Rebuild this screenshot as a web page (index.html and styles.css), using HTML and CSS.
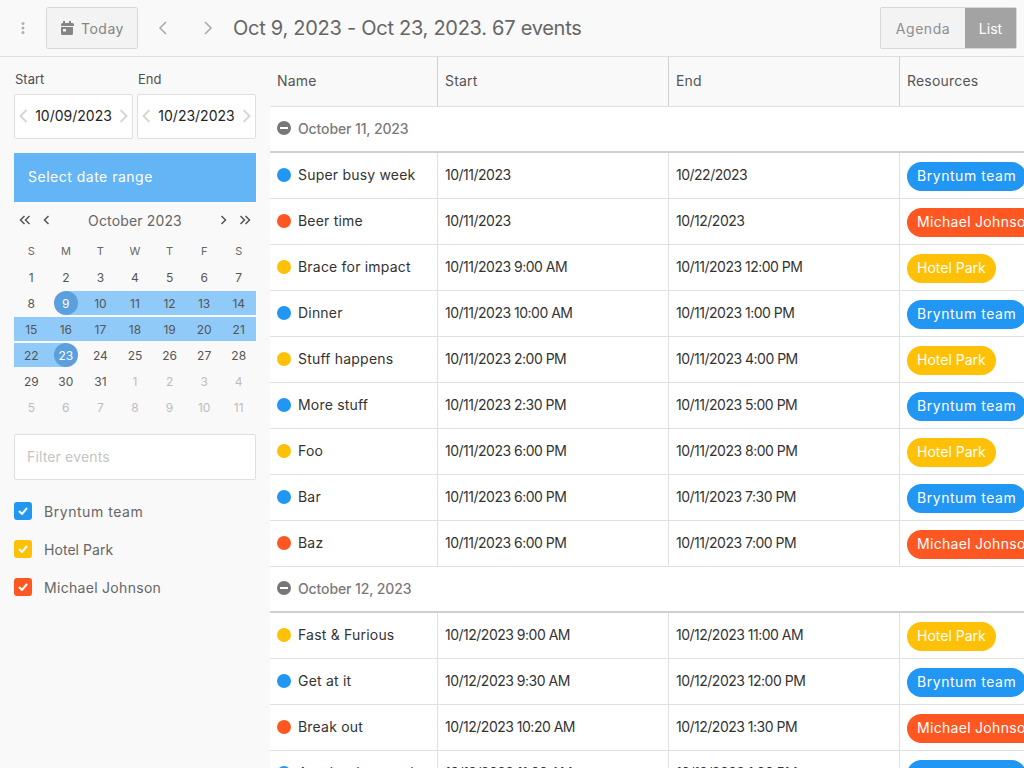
FILE: index.html
```html
<!DOCTYPE html>
<html lang="en">
<head>
    <meta charset="UTF-8">
    <title>Calendar list view</title>
    <link rel="stylesheet" href="styles.css">
</head>
<body>
    <header class="toolbar">
        <svg class="menu-icon" width="4" height="12" viewBox="0 0 4 12"><circle cx="2" cy="1.500" r="1.500"/><circle cx="2" cy="6" r="1.500"/><circle cx="2" cy="10.500" r="1.500"/></svg>
        <button class="today-btn">
            <svg width="14" height="14" viewBox="0 0 14 14"><path d="M3 0h2v2h4V0h2v2h1.500A1.500 1.500 0 0 1 14 3.500V5H1V3.500A1.500 1.500 0 0 1 2.500 2H3zM1 6h12v6.500a1.500 1.500 0 0 1-1.500 1.500h-9A1.500 1.500 0 0 1 1 12.500zm2 2v2.500h3V8z"/></svg>
            Today
        </button>
        <svg class="nav-arrow" width="10" height="14" viewBox="0 0 10 14"><path d="M8 1L2 7l6 6"/></svg>
        <svg class="nav-arrow" width="10" height="14" viewBox="0 0 10 14"><path d="M2 1l6 6-6 6"/></svg>
        <h1 class="range-title">Oct 9, 2023 - Oct 23, 2023. 67 events</h1>
        <div class="view-switch">
            <span class="view-btn">Agenda</span>
            <span class="view-btn active">List</span>
        </div>
    </header>

    <div class="main">
        <aside class="sidebar">
            <div class="date-fields">
                <div class="date-field">
                    <label>Start</label>
                    <div class="date-input">
                        <svg width="9" height="14" viewBox="0 0 9 14"><path d="M7.500 1L1.500 7l6 6"/></svg>
                        <span>10/09/2023</span>
                        <svg width="9" height="14" viewBox="0 0 9 14"><path d="M1.500 1l6 6-6 6"/></svg>
                    </div>
                </div>
                <div class="date-field">
                    <label>End</label>
                    <div class="date-input">
                        <svg width="9" height="14" viewBox="0 0 9 14"><path d="M7.500 1L1.500 7l6 6"/></svg>
                        <span>10/23/2023</span>
                        <svg width="9" height="14" viewBox="0 0 9 14"><path d="M1.500 1l6 6-6 6"/></svg>
                    </div>
                </div>
            </div>

            <div class="range-btn">Select date range</div>

            <div class="cal-head">
                <svg width="12" height="10" viewBox="0 0 12 10"><path d="M5.500 1l-4 4 4 4M10.500 1l-4 4 4 4"/></svg>
                <svg class="cal-prev" width="7" height="10" viewBox="0 0 7 10"><path d="M5.500 1l-4 4 4 4"/></svg>
                <span class="cal-title">October 2023</span>
                <svg class="cal-next" width="7" height="10" viewBox="0 0 7 10"><path d="M1.500 1l4 4-4 4"/></svg>
                <svg width="12" height="10" viewBox="0 0 12 10"><path d="M1.500 1l4 4-4 4M6.500 1l4 4-4 4"/></svg>
            </div>

            <div class="cal-grid" id="cal"></div>

            <div class="filter-input">Filter events</div>

            <ul class="resource-list">
                <li class="res-blue"><span class="check blue"><svg width="10" height="8" viewBox="0 0 10 8"><path d="M1 4l3 3 5-6"/></svg></span>Bryntum team</li>
                <li class="res-yellow"><span class="check yellow"><svg width="10" height="8" viewBox="0 0 10 8"><path d="M1 4l3 3 5-6"/></svg></span>Hotel Park</li>
                <li class="res-orange"><span class="check orange"><svg width="10" height="8" viewBox="0 0 10 8"><path d="M1 4l3 3 5-6"/></svg></span>Michael Johnson</li>
            </ul>
        </aside>

        <section class="grid">
            <div class="row head">
                <div class="cell name">Name</div>
                <div class="cell date">Start</div>
                <div class="cell date">End</div>
                <div class="cell res">Resources</div>
            </div>
            <div id="rows"></div>
        </section>
    </div>

    <script>
        // calendar cells
        const cal = document.getElementById('cal');
        const days = ['S', 'M', 'T', 'W', 'T', 'F', 'S'];
        days.forEach(d => {
            cal.insertAdjacentHTML('beforeend', `<div class="dow">${d}</div>`);
        });
        const nums = [];
        for (let i = 1; i <= 31; i++) nums.push([i, false]);
        for (let i = 1; i <= 11; i++) nums.push([i, true]);
        nums.forEach(([n, other], i) => {
            let cls = 'day';
            if (other) cls += ' other';
            if (!other && n >= 9 && n <= 23) cls += ' in-range';
            if (!other && n === 9) cls += ' range-start';
            if (!other && n === 23) cls += ' range-end';
            cal.insertAdjacentHTML('beforeend', `<div class="${cls}"><span>${n}</span></div>`);
        });

        // grid rows
        const blue = ['blue', 'Bryntum team'];
        const yellow = ['yellow', 'Hotel Park'];
        const orange = ['orange', 'Michael Johnson'];
        const data = [
            ['October 11, 2023'],
            ['Super busy week', '10/11/2023', '10/22/2023', blue],
            ['Beer time', '10/11/2023', '10/12/2023', orange],
            ['Brace for impact', '10/11/2023 9:00 AM', '10/11/2023 12:00 PM', yellow],
            ['Dinner', '10/11/2023 10:00 AM', '10/11/2023 1:00 PM', blue],
            ['Stuff happens', '10/11/2023 2:00 PM', '10/11/2023 4:00 PM', yellow],
            ['More stuff', '10/11/2023 2:30 PM', '10/11/2023 5:00 PM', blue],
            ['Foo', '10/11/2023 6:00 PM', '10/11/2023 8:00 PM', yellow],
            ['Bar', '10/11/2023 6:00 PM', '10/11/2023 7:30 PM', blue],
            ['Baz', '10/11/2023 6:00 PM', '10/11/2023 7:00 PM', orange],
            ['October 12, 2023'],
            ['Fast & Furious', '10/12/2023 9:00 AM', '10/12/2023 11:00 AM', yellow],
            ['Get at it', '10/12/2023 9:30 AM', '10/12/2023 12:00 PM', blue],
            ['Break out', '10/12/2023 10:20 AM', '10/12/2023 1:30 PM', orange],
            ['Another long task', '10/12/2023 11:00 AM', '10/12/2023 1:00 PM', blue]
        ];
        const rows = document.getElementById('rows');
        data.forEach(r => {
            if (r.length === 1) {
                rows.insertAdjacentHTML('beforeend', `<div class="group-row"><span class="collapse"></span>${r[0]}</div>`);
                return;
            }
            const name = r[0].replace('&', '&amp;');
            rows.insertAdjacentHTML('beforeend', `<div class="row">
                <div class="cell name"><span class="dot ${r[3][0]}"></span>${name}</div>
                <div class="cell date">${r[1]}</div>
                <div class="cell date">${r[2]}</div>
                <div class="cell res"><span class="chip ${r[3][0]}">${r[3][1]}</span></div>
            </div>`);
        });
    </script>
</body>
</html>
```
FILE: styles.css
```css
* {
    box-sizing: border-box;
}
html, body {
    height: 100%;
}
body {
    margin: 0;
    overflow: hidden;
    font-family: Inter, "Open Sans", sans-serif;
    font-size: 14px;
    color: #4f4f4f;
    background-color: #f9f9f9;
}
svg path {
    fill: none;
    stroke: currentColor;
    stroke-width: 1.5;
}
.toolbar {
    display: flex;
    align-items: center;
    height: 57px;
    padding: 7px 7px 7px 21px;
    border-bottom: 1px solid #e0e0e0;
}
.menu-icon {
    fill: #b0b0b0;
    margin-right: 21px;
}
.today-btn {
    display: flex;
    align-items: center;
    gap: 7px;
    width: 92px;
    height: 42px;
    padding: 0 13px;
    border: 1px solid #d8d8d8;
    border-radius: 2px;
    background-color: #f3f3f3;
    color: #858585;
    font: inherit;
    letter-spacing: 0.5px;
}
.today-btn svg {
    fill: #858585;
}
.today-btn svg path {
    fill: #858585;
    stroke: none;
}
.nav-arrow {
    color: #a8a8a8;
    margin-left: 20px;
    margin-right: 15px;
}
.range-title {
    margin: 0 0 0 5px;
    font-size: 20px;
    font-weight: 400;
    letter-spacing: -0.27px;
    color: #666;
    flex: 1;
}
.view-switch {
    display: flex;
    height: 42px;
    border: 1px solid #d8d8d8;
    border-radius: 2px;
}
.view-btn {
    display: flex;
    align-items: center;
    justify-content: center;
    width: 84px;
    background-color: #f3f3f3;
    color: #8f8f8f;
    letter-spacing: 0.55px;
}
.view-btn.active {
    width: 51px;
    background-color: #a3a3a3;
    color: #fff;
    letter-spacing: 0;
}
.main {
    display: flex;
    height: 711px;
}
.sidebar {
    width: 270px;
    padding: 13px 14px 0;
    flex: none;
}
.date-fields {
    display: flex;
    gap: 4px;
}
.date-field {
    width: 119px;
}
.date-field label {
    display: block;
    padding-left: 1px;
    font-size: 13px;
    line-height: 18px;
    margin-bottom: 6px;
}
.date-input {
    display: flex;
    align-items: center;
    justify-content: space-between;
    height: 45px;
    padding: 0 4px 2px;
    background-color: #fff;
    border: 1px solid #e0e0e0;
    border-radius: 2px;
    color: #222;
}
.date-input svg {
    color: #d6d6d6;
}
.date-input svg path {
    stroke-width: 2;
}
.range-btn {
    display: flex;
    align-items: center;
    height: 49px;
    margin-top: 14px;
    padding-left: 14px;
    padding-bottom: 2px;
    background-color: #64b5f6;
    color: #fff;
    letter-spacing: 0.5px;
}
.cal-head {
    display: flex;
    align-items: center;
    height: 36px;
    padding: 0 5px;
    color: #555;
}
.cal-prev {
    margin-left: 12px;
}
.cal-next {
    margin-right: 12px;
}
.cal-title {
    flex: 1;
    text-align: center;
    font-size: 14px;
    letter-spacing: 0.15px;
    color: #666;
}
.cal-grid {
    display: grid;
    grid-template-columns: repeat(7, 1fr);
    grid-auto-rows: 26px;
    font-size: 12px;
}
.dow {
    display: flex;
    align-items: center;
    justify-content: center;
    font-size: 11px;
    color: #666;
}
.day {
    display: flex;
    align-items: center;
    justify-content: center;
    color: #555;
    margin: 1px 0;
}
.day span {
    display: flex;
    align-items: center;
    justify-content: center;
    width: 24px;
    height: 24px;
    border-radius: 50%;
}
.day.other {
    color: #bdbdbd;
}
.day.in-range {
    background-color: #90caf9;
}
.day.range-start {
    background: linear-gradient(to right, transparent 50%, #90caf9 50%);
}
.day.range-end {
    background: linear-gradient(to right, #90caf9 50%, transparent 50%);
}
.day.range-start span,
.day.range-end span {
    background-color: #5c9fdf;
    color: #fff;
}
.filter-input {
    display: flex;
    align-items: center;
    height: 46px;
    margin-top: 14px;
    padding-left: 12px;
    padding-bottom: 2px;
    background-color: #fff;
    border: 1px solid #e0e0e0;
    border-radius: 2px;
    letter-spacing: 0.15px;
    color: #c4c4c4;
}
.resource-list {
    list-style: none;
    margin: 12px 0 0;
    padding: 0;
}
.resource-list li {
    display: flex;
    align-items: center;
    gap: 12px;
    height: 38px;
    color: #666;
}
.res-blue {
    letter-spacing: 0.55px;
}
.res-yellow {
    letter-spacing: 0.05px;
}
.res-orange {
    letter-spacing: 0.3px;
}
.check {
    display: flex;
    align-items: center;
    justify-content: center;
    width: 18px;
    height: 18px;
    border-radius: 3px;
    color: #fff;
}
.check path {
    stroke-width: 2;
}
.blue {
    background-color: #2196f3;
}
.yellow {
    background-color: #ffc107;
}
.orange {
    background-color: #ff5722;
}
.grid {
    flex: 1;
    overflow: hidden;
    background-color: #fff;
}
.row {
    display: flex;
    height: 46px;
    border-bottom: 1px solid #e0e0e0;
    color: #333;
}
.row.head {
    height: 50px;
    background-color: #f9f9f9;
    color: #555;
}
.cell {
    display: flex;
    align-items: center;
    flex: none;
    padding-left: 7px;
    border-right: 1px solid #e0e0e0;
    white-space: nowrap;
}
.head .cell {
    border-right-color: #d0d0d0;
    letter-spacing: 0.2px;
    padding-bottom: 2px;
}
.cell.name {
    width: 168px;
    padding-bottom: 2px;
    letter-spacing: 0.2px;
}
.cell.date {
    width: 231px;
    padding-bottom: 2px;
}
.row:not(.head) .cell.date {
    letter-spacing: -0.5px;
}
.cell.res {
    width: 200px;
    border-right: 0;
}
.dot {
    flex: none;
    width: 14px;
    height: 14px;
    border-radius: 50%;
    margin-right: 7px;
}
.group-row {
    display: flex;
    align-items: center;
    height: 46px;
    padding: 0 0 2px 7px;
    border-bottom: 2px solid #d0d0d0;
    color: #7a7a7a;
    font-weight: 500;
    letter-spacing: -0.12px;
}
.collapse {
    position: relative;
    width: 14px;
    height: 14px;
    margin-right: 7px;
    border-radius: 50%;
    background-color: #777;
}
.collapse::after {
    content: "";
    position: absolute;
    left: 3px;
    top: 6px;
    width: 8px;
    height: 2px;
    background-color: #fff;
}
.chip {
    display: inline-flex;
    align-items: center;
    height: 29px;
    margin-top: 1px;
    padding: 0 10px 2px;
    border-radius: 15px;
    color: #fff;
    white-space: nowrap;
    letter-spacing: 0.55px;
}
.chip.yellow {
    letter-spacing: 0;
}
.chip.orange {
    letter-spacing: 0.3px;
}
```
